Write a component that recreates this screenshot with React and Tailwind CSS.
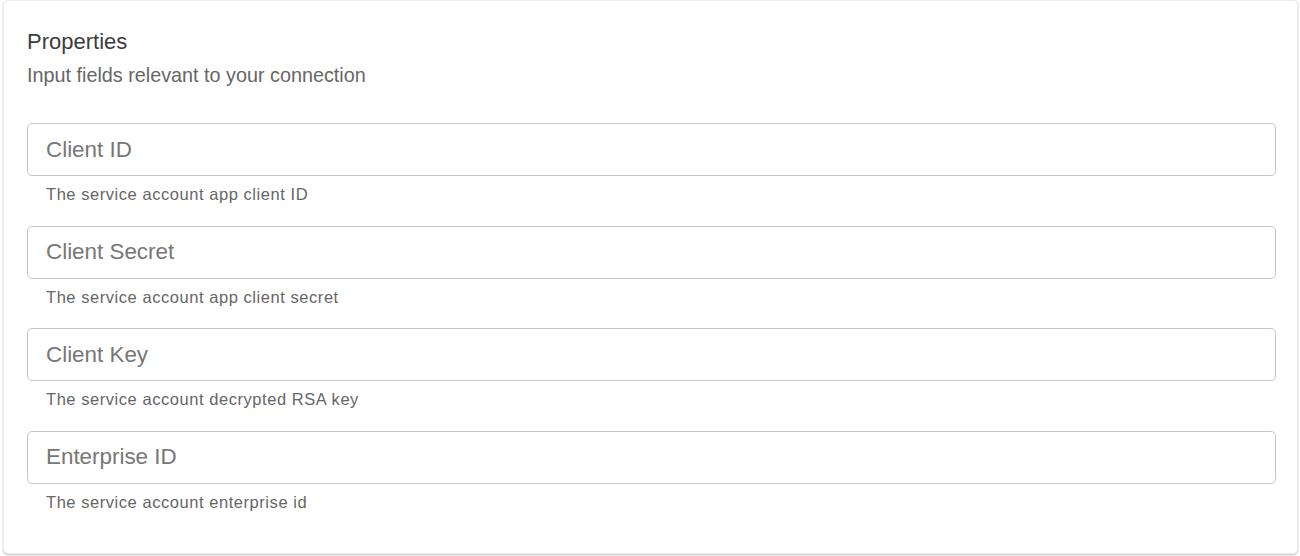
const fields = [
  { label: "Client ID", help: "The service account app client ID" },
  { label: "Client Secret", help: "The service account app client secret" },
  { label: "Client Key", help: "The service account decrypted RSA key" },
  { label: "Enterprise ID", help: "The service account enterprise id" },
];

export default function App() {
  return (
    <div className="w-[1300px] h-[556px] bg-white pl-[3px] pr-[2px] pb-[2px] font-['Liberation_Sans',Arial,sans-serif]">
      <div className="h-full rounded-[5px] bg-white border border-[#ececec] shadow-[0_1px_2px_rgba(0,0,0,0.25)] pl-[23px] pr-[21px] pt-[27px]">
        <h2 className="text-[22px] leading-[28px] text-[#3d3d3d]">Properties</h2>
        <p className="mt-[6px] text-[19.8px] leading-[26px] text-[#666]">
          Input fields relevant to your connection
        </p>
        <div className="mt-[35px] flex flex-col">
          {fields.map((f) => (
            <div key={f.label} className="mb-[20.67px]">
              <input
                type="text"
                placeholder={f.label}
                className="w-full h-[53px] rounded-[5px] border border-[#c6c6c6] bg-white px-[18px] text-[22.4px] text-[#333] placeholder:text-[#777] outline-none"
              />
              <p className="mt-[7px] pl-[19px] text-[16.5px] leading-[22px] tracking-[0.55px] text-[#666]">
                {f.help}
              </p>
            </div>
          ))}
        </div>
      </div>
    </div>
  );
}
